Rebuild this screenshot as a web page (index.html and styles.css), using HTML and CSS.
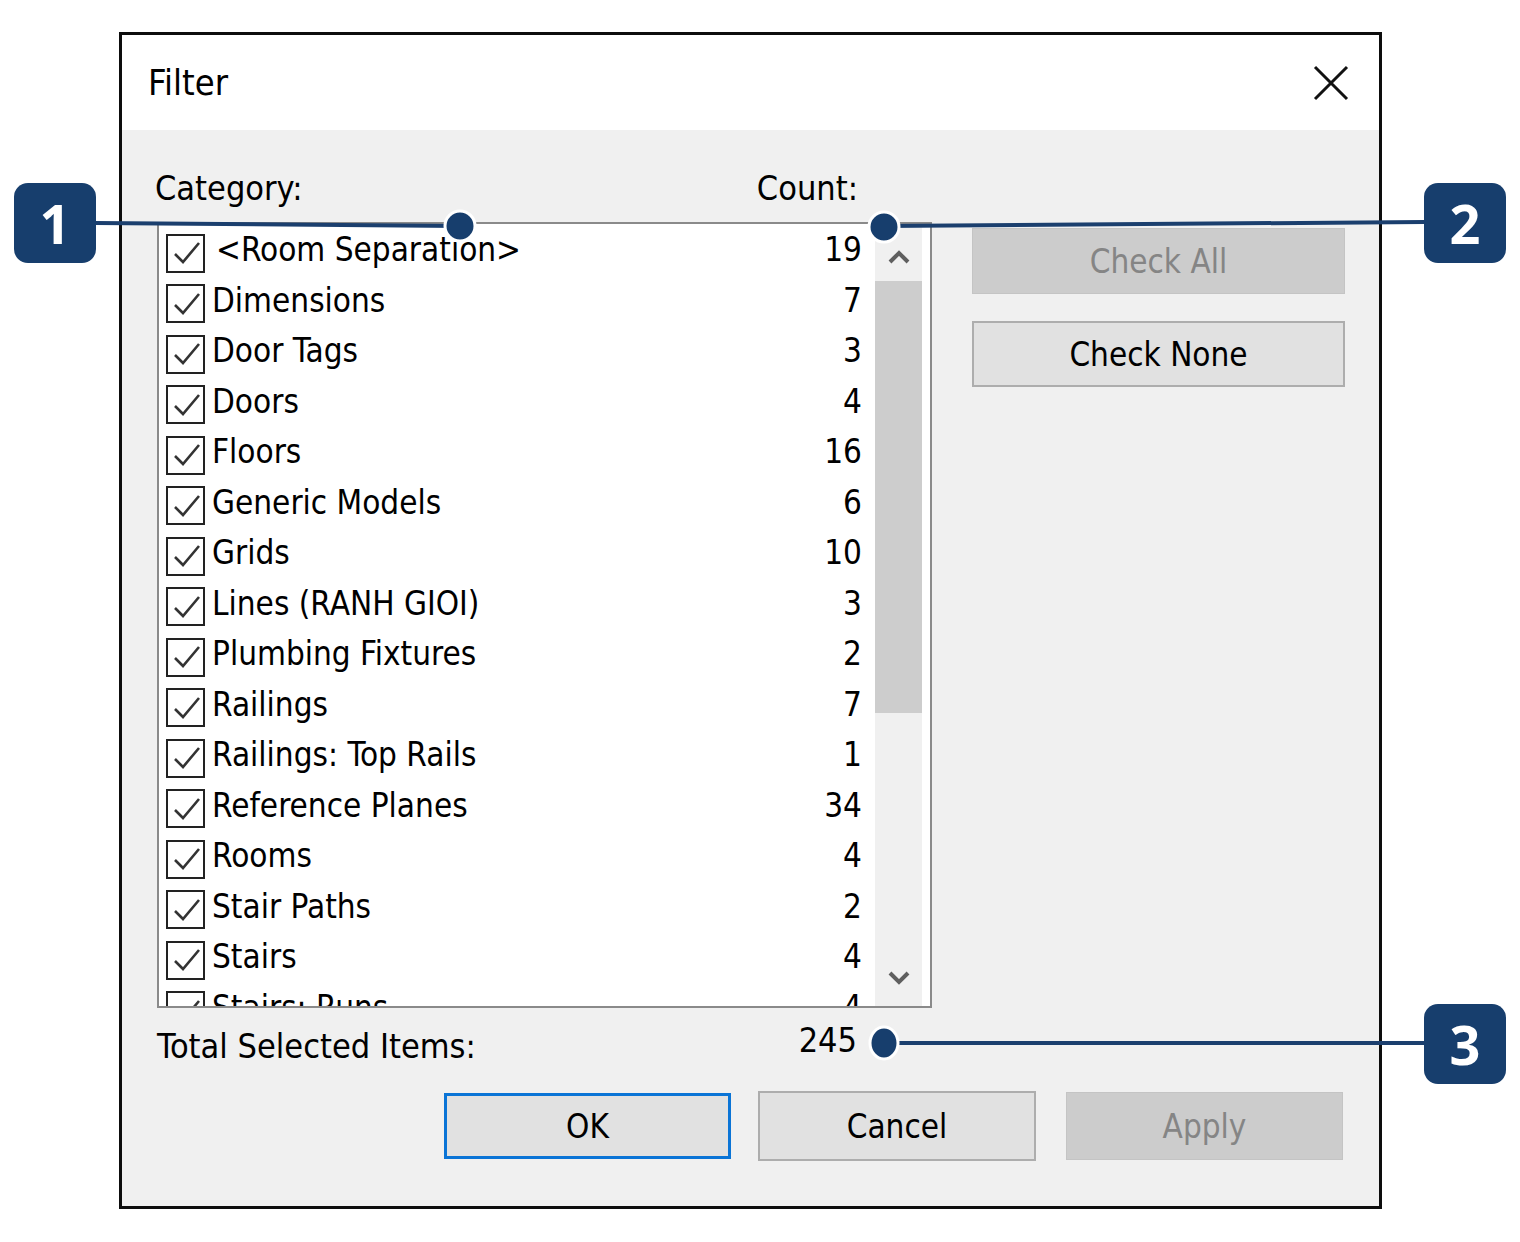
FILE: index.html
```html
<!DOCTYPE html>
<html lang="en">
<head>
    <meta charset="UTF-8">
    <title>Filter</title>
    <link rel="stylesheet" href="styles.css">
</head>
<body>
    <div class="page">
        <div class="dialog">
            <div class="titlebar">
                <span class="title">Filter</span>
                <svg class="close" width="36" height="36" viewBox="0 0 36 36">
                    <path d="M2 2 L34 34 M34 2 L2 34" stroke="#111" stroke-width="3" fill="none"/>
                </svg>
            </div>
            <div class="body">
                <div class="main">
                    <div class="left">
                        <div class="col-head">
                            <span>Category:</span>
                            <span>Count:</span>
                        </div>
                        <div class="listbox">
                            <div class="rows">
                                <div class="row"><span class="check"></span><span class="name first">&lt;Room Separation&gt;</span><span class="count">19</span></div>
                                <div class="row"><span class="check"></span><span class="name">Dimensions</span><span class="count">7</span></div>
                                <div class="row"><span class="check"></span><span class="name">Door Tags</span><span class="count">3</span></div>
                                <div class="row"><span class="check"></span><span class="name">Doors</span><span class="count">4</span></div>
                                <div class="row"><span class="check"></span><span class="name">Floors</span><span class="count">16</span></div>
                                <div class="row"><span class="check"></span><span class="name">Generic Models</span><span class="count">6</span></div>
                                <div class="row"><span class="check"></span><span class="name">Grids</span><span class="count">10</span></div>
                                <div class="row"><span class="check"></span><span class="name">Lines (RANH GIOI)</span><span class="count">3</span></div>
                                <div class="row"><span class="check"></span><span class="name">Plumbing Fixtures</span><span class="count">2</span></div>
                                <div class="row"><span class="check"></span><span class="name">Railings</span><span class="count">7</span></div>
                                <div class="row"><span class="check"></span><span class="name">Railings: Top Rails</span><span class="count">1</span></div>
                                <div class="row"><span class="check"></span><span class="name">Reference Planes</span><span class="count">34</span></div>
                                <div class="row"><span class="check"></span><span class="name">Rooms</span><span class="count">4</span></div>
                                <div class="row"><span class="check"></span><span class="name">Stair Paths</span><span class="count">2</span></div>
                                <div class="row"><span class="check"></span><span class="name">Stairs</span><span class="count">4</span></div>
                                <div class="row"><span class="check"></span><span class="name">Stairs: Runs</span><span class="count">4</span></div>
                            </div>
                            <div class="scrollbar">
                                <div class="sb-btn sb-up">
                                    <svg width="24" height="16" viewBox="0 0 24 16"><polyline points="3,13 12,4 21,13" stroke="#5f5f5f" stroke-width="4" fill="none"/></svg>
                                </div>
                                <div class="sb-thumb"></div>
                                <div class="sb-track"></div>
                                <div class="sb-btn sb-down">
                                    <svg width="24" height="16" viewBox="0 0 24 16"><polyline points="3,3 12,12 21,3" stroke="#5f5f5f" stroke-width="4" fill="none"/></svg>
                                </div>
                            </div>
                        </div>
                    </div>
                    <div class="side">
                        <button class="btn btn-side disabled">Check All</button>
                        <button class="btn btn-side">Check None</button>
                    </div>
                </div>
                <div class="total">
                    <span class="total-label">Total Selected Items:</span>
                    <span class="total-count">245</span>
                </div>
                <div class="actions">
                    <button class="btn btn-ok">OK</button>
                    <button class="btn btn-cancel">Cancel</button>
                    <button class="btn btn-apply disabled">Apply</button>
                </div>
            </div>
        </div>

        <!-- callouts -->
        <svg class="leaders" width="1520" height="1242" viewBox="0 0 1520 1242">
            <g stroke="#1b3f6e" stroke-width="4">
                <line x1="96" y1="223" x2="460" y2="226"/>
                <line x1="883" y1="226" x2="1424" y2="222"/>
                <line x1="883" y1="1043" x2="1424" y2="1043"/>
            </g>
            <g fill="#173e6d" stroke="#fff" stroke-width="3">
                <circle cx="460" cy="226" r="15"/>
                <circle cx="884" cy="227" r="15"/>
                <ellipse cx="884" cy="1043" rx="14" ry="16"/>
            </g>
        </svg>
        <div class="badge badge-1">1</div>
        <div class="badge badge-2">2</div>
        <div class="badge badge-3">3</div>
    </div>
</body>
</html>
```

FILE: styles.css
```css
body {
    margin: 0;
    background: #FFFFFF;
    font-family: "DejaVu Sans Condensed", "Liberation Sans", sans-serif;
    color: #000000;
}

.page {
    position: relative;
    width: 1520px;
    height: 1242px;
    padding: 32px 0 0 119px;
    box-sizing: border-box;
}

.dialog {
    width: 1263px;
    height: 1177px;
    border: 3px solid #0d0d0d;
    box-sizing: border-box;
    background: #F0F0F0;
    display: flex;
    flex-direction: column;
}

.titlebar {
    height: 95px;
    background: #FFFFFF;
    display: flex;
    align-items: center;
    justify-content: space-between;
    padding: 0 30px 0 26px;
}

.title {
    font-size: 36px;
}

.body {
    padding: 38px 33px 0 35px;
}

.main {
    display: flex;
    gap: 40px;
}

.left {
    width: 775px;
}

.col-head {
    display: flex;
    justify-content: space-between;
    height: 40px;
    line-height: 40px;
    font-size: 34px;
    margin-left: -2px;
    padding-right: 74px;
}

.listbox {
    margin-top: 14px;
    height: 786px;
    box-sizing: border-box;
    border: 2px solid #8a8a8a;
    background: #FFFFFF;
    display: flex;
    padding-right: 8px;
}

.rows {
    flex: 1;
    overflow: hidden;
    padding: 1px 13px 0 7px;
}

.row {
    height: 50.5px;
    display: flex;
    align-items: center;
    font-size: 33px;
    line-height: 34px;
}

.check {
    width: 39px;
    height: 39px;
    box-sizing: border-box;
    border: 2.5px solid #222222;
    flex-shrink: 0;
    margin-top: 6px;
    background: #FFFFFF url("data:image/svg+xml,%3Csvg xmlns='http://www.w3.org/2000/svg' width='34' height='34'%3E%3Cpolyline points='6,18 14,26 30,7' stroke='%23333' stroke-width='2.6' fill='none'/%3E%3C/svg%3E") no-repeat center;
}

.name {
    margin-left: 7px;
    white-space: nowrap;
}

.name.first {
    margin-left: 11px;
}

.count {
    margin-left: auto;
}

.scrollbar {
    width: 47px;
    background: #F0F0F0;
    display: flex;
    flex-direction: column;
}

.sb-btn {
    display: flex;
    justify-content: center;
    align-items: center;
}

.sb-up {
    height: 57px;
    padding-top: 8px;
    box-sizing: border-box;
}

.sb-down {
    height: 56px;
}

.sb-thumb {
    height: 432px;
    background: #CDCDCD;
}

.sb-track {
    flex: 1;
}

.side {
    display: flex;
    flex-direction: column;
    padding-top: 60px;
}

.btn {
    font-family: inherit;
    font-size: 33px;
    color: #000000;
    background: #E1E1E1;
    border: 2px solid #ADADAD;
    box-sizing: border-box;
    padding: 0;
}

.btn.disabled {
    background: #CCCCCC;
    border: 1px solid #C4C4C4;
    color: #858585;
}

.btn-side {
    width: 373px;
    height: 66px;
}

.btn-side + .btn-side {
    margin-top: 27px;
}

.total {
    display: flex;
    align-items: flex-start;
    justify-content: space-between;
    width: 775px;
    margin-top: 12px;
    font-size: 34px;
    line-height: 26px;
    padding-right: 75px;
    box-sizing: border-box;
}

.total-label {
    margin-top: 13px;
}

.total-count {
    margin-top: 7px;
}

.actions {
    display: flex;
    justify-content: flex-end;
    align-items: center;
    margin-top: 32px;
    margin-right: 3px;
}

.btn-ok {
    width: 287px;
    height: 66px;
    border: 3px solid #0A74D6;
    margin-right: 27px;
}

.btn-cancel {
    width: 278px;
    height: 70px;
    margin-right: 30px;
}

.btn-apply {
    width: 277px;
    height: 68px;
}

.leaders {
    position: absolute;
    left: 0;
    top: 0;
}

.badge {
    position: absolute;
    width: 82px;
    height: 80px;
    border-radius: 14px;
    background: #173E6D;
    color: #FFFFFF;
    font-family: "Open Sans", "Liberation Sans", sans-serif;
    font-weight: bold;
    font-size: 54px;
    line-height: 80px;
    text-align: center;
}

.badge-1 {
    left: 14px;
    top: 183px;
}

.badge-2 {
    left: 1424px;
    top: 183px;
}

.badge-3 {
    left: 1424px;
    top: 1004px;
}
```
